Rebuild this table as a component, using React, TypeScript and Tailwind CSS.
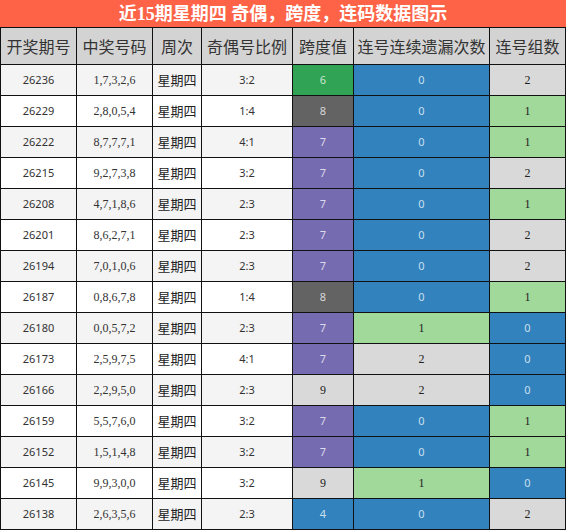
import React from "react";

type Row = [string, string, string, number, number, number];

const rows: Row[] = [
  ["26236", "1,7,3,2,6", "3:2", 6, 0, 2],
  ["26229", "2,8,0,5,4", "1:4", 8, 0, 1],
  ["26222", "8,7,7,7,1", "4:1", 7, 0, 1],
  ["26215", "9,2,7,3,8", "3:2", 7, 0, 2],
  ["26208", "4,7,1,8,6", "2:3", 7, 0, 1],
  ["26201", "8,6,2,7,1", "2:3", 7, 0, 2],
  ["26194", "7,0,1,0,6", "2:3", 7, 0, 2],
  ["26187", "0,8,6,7,8", "1:4", 8, 0, 1],
  ["26180", "0,0,5,7,2", "2:3", 7, 1, 0],
  ["26173", "2,5,9,7,5", "4:1", 7, 2, 0],
  ["26166", "2,2,9,5,0", "2:3", 9, 2, 0],
  ["26159", "5,5,7,6,0", "3:2", 7, 0, 1],
  ["26152", "1,5,1,4,8", "3:2", 7, 0, 1],
  ["26145", "9,9,3,0,0", "3:2", 9, 1, 0],
  ["26138", "2,6,3,5,6", "2:3", 4, 0, 2],
];

const cellColor = (v: number): { bg: string; light: boolean } => {
  switch (v) {
    case 0:
    case 4:
      return { bg: "bg-[#3182bd]", light: true };
    case 1:
      return { bg: "bg-[#a1d99b]", light: false };
    case 2:
    case 9:
      return { bg: "bg-[#d9d9d9]", light: false };
    case 6:
      return { bg: "bg-[#31a354]", light: true };
    case 7:
      return { bg: "bg-[#756bb1]", light: true };
    case 8:
      return { bg: "bg-[#636363]", light: true };
    default:
      return { bg: "bg-white", light: false };
  }
};

const headers = ["开奖期号", "中奖号码", "周次", "奇偶号比例", "跨度值", "连号连续遗漏次数", "连号组数"];

const sans = "font-['Noto_Sans',sans-serif] text-[11px]";
const serif = "font-['Liberation_Serif',serif] text-[12px]";

function ColorCell({ v }: { v: number }) {
  const c = cellColor(v);
  return (
    <div
      className={`flex items-center justify-center border-r border-b border-[#111] ${c.bg} ${
        c.light ? `${sans} text-white/75` : `${serif} text-[#222]`
      }`}
    >
      {v}
    </div>
  );
}

export default function App() {
  return (
    <div className="w-[566px] h-[530px] bg-white font-['Noto_Sans_CJK_SC',sans-serif]">
      <div className="h-[27px] bg-[#ff6347] flex items-center justify-center text-white font-bold text-[18px] leading-none font-['Liberation_Serif','Noto_Sans_CJK_SC',serif]">
        近15期星期四 奇偶，跨度，连码数据图示
      </div>
      <div className="grid grid-cols-[76px_76px_49px_91px_61px_136px_76px] grid-rows-[37px_repeat(15,31px)] border-t border-l border-[#111]">
        {headers.map((h) => (
          <div
            key={h}
            className="flex items-center justify-center bg-[#d3d3d3] border-r border-b border-[#111] text-[16px] text-[#333] font-['Noto_Sans_CJK_SC',sans-serif] whitespace-nowrap"
          >
            {h}
          </div>
        ))}
        {rows.map((r, i) => {
          const bg = i % 2 === 0 ? "bg-[#f4f4f4]" : "bg-white";
          return (
            <React.Fragment key={r[0]}>
              <div className={`flex items-center justify-center border-r border-b border-[#111] ${bg} ${sans} text-[#333]`}>
                {r[0]}
              </div>
              <div className={`flex items-center justify-center border-r border-b border-[#111] ${bg} ${serif} text-[#333]`}>
                {r[1]}
              </div>
              <div className={`flex items-center justify-center border-r border-b border-[#111] ${bg} text-[13px] text-[#222] font-['Noto_Sans_CJK_SC',sans-serif]`}>
                星期四
              </div>
              <div className={`flex items-center justify-center border-r border-b border-[#111] ${bg} ${sans} text-[#333]`}>
                {r[2]}
              </div>
              <ColorCell v={r[3]} />
              <ColorCell v={r[4]} />
              <ColorCell v={r[5]} />
            </React.Fragment>
          );
        })}
      </div>
    </div>
  );
}
